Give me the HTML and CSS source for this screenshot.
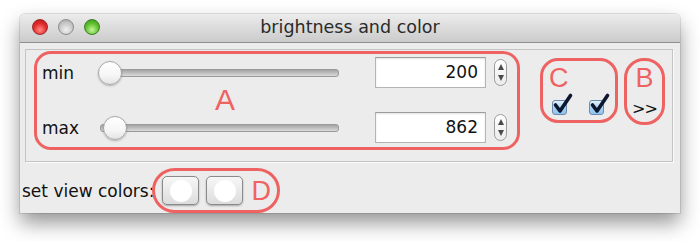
FILE: index.html
```html
<!DOCTYPE html>
<html lang="en">
<head>
    <meta charset="UTF-8">
    <title>brightness and color</title>
    <link rel="stylesheet" href="styles.css">
</head>
<body>
    <div class="window">
        <div class="titlebar">
            <div class="lights">
                <span class="light red"></span>
                <span class="light gray"></span>
                <span class="light green"></span>
            </div>
            <div class="title">brightness and color</div>
        </div>

        <div class="content">
            <div class="panel">
                <div class="mark mark-a">
                    <div class="row">
                        <span class="label">min</span>
                        <div class="slider"><span class="thumb"></span></div>
                        <div class="field">200</div>
                        <div class="spinner"><span class="up"></span><span class="down"></span></div>
                    </div>
                    <div class="tag tag-a">A</div>
                    <div class="row">
                        <span class="label">max</span>
                        <div class="slider"><span class="thumb thumb-max"></span></div>
                        <div class="field">862</div>
                        <div class="spinner"><span class="up"></span><span class="down"></span></div>
                    </div>
                </div>

                <div class="mark mark-c">
                    <div class="tag tag-c">C</div>
                    <div class="checks">
                        <span class="check">
                            <svg width="22" height="24" viewBox="0 0 22 24"><path d="M3.5 13 L8 19 L18.5 3.5" fill="none" stroke="#0b1830" stroke-width="3.6" stroke-linecap="round" stroke-linejoin="round"/></svg>
                        </span>
                        <span class="check">
                            <svg width="22" height="24" viewBox="0 0 22 24"><path d="M3.5 13 L8 19 L18.5 3.5" fill="none" stroke="#0b1830" stroke-width="3.6" stroke-linecap="round" stroke-linejoin="round"/></svg>
                        </span>
                    </div>
                </div>

                <div class="mark mark-b">
                    <div class="tag tag-b">B</div>
                    <div class="more">&gt;&gt;</div>
                </div>
            </div>

            <div class="bottom">
                <span class="label">set view colors:</span>
                <div class="mark mark-d">
                    <button class="swatch"><span class="dot"></span></button>
                    <button class="swatch"><span class="dot"></span></button>
                    <span class="tag tag-d">D</span>
                </div>
            </div>
        </div>
    </div>
</body>
</html>
```

FILE: styles.css
```css
body {
    margin: 0;
    padding-bottom: 29px;
    background-color: #ffffff;
    font-family: "DejaVu Sans", sans-serif;
    color: #111111;
}
.window {
    margin: 14px 0 0 20px;
    width: 660px;
    height: 199px;
    background-color: #ececec;
    border-radius: 5px 5px 0 0;
    box-shadow: 0 10px 20px rgba(0, 0, 0, 0.42), 0 0 0 1px rgba(0, 0, 0, 0.1);
}
.titlebar {
    height: 28px;
    border-bottom: 1px solid #8e8e8e;
    border-radius: 5px 5px 0 0;
    background: linear-gradient(#ececec, #cbcbcb);
    display: flex;
    align-items: center;
    position: relative;
}
.lights {
    display: flex;
    gap: 10px;
    padding-left: 12px;
    margin-top: -2px;
}
.light {
    width: 16px;
    height: 16px;
    border-radius: 50%;
    box-sizing: border-box;
}
.red {
    background: radial-gradient(circle at 50% 70%, #ff8a80 0%, #e0282a 55%, #b0161a 100%);
    border: 1px solid #9d2a2a;
}
.gray {
    background: radial-gradient(circle at 50% 70%, #f0f0f0 0%, #c8c8c8 55%, #a0a0a0 100%);
    border: 1px solid #8c8c8c;
}
.green {
    background: radial-gradient(circle at 50% 70%, #c4f59a 0%, #5cbf2a 55%, #3a8e1a 100%);
    border: 1px solid #3f7f25;
}
.title {
    position: absolute;
    left: 0;
    right: 0;
    top: 3px;
    text-align: center;
    font-size: 17.5px;
    color: #2a2a2a;
    pointer-events: none;
}
.content {
    padding: 6px 0 0 5px;
}
.panel {
    width: 646px;
    height: 111px;
    border: 1px solid #c4c4c4;
    box-shadow: 1px 1px 0 #fafafa;
    display: flex;
    align-items: flex-start;
}
.mark {
    border: 3px solid #ef6262;
    box-sizing: border-box;
}
.tag {
    font-family: "Liberation Sans", sans-serif;
    color: #ef6262;
}
.mark-a {
    width: 486px;
    height: 99px;
    margin: 1px 0 0 8px;
    border-radius: 17px;
    padding: 3px 0 0 5px;
}
.row {
    display: flex;
    align-items: center;
    height: 31px;
}
.label {
    font-size: 17px;
}
.row .label {
    width: 56px;
}
.slider {
    width: 241px;
    height: 24px;
    display: flex;
    align-items: center;
    position: relative;
}
.slider::before {
    content: "";
    flex: 1;
    height: 6px;
    margin-left: 2px;
    border-radius: 3px;
    border: 1px solid #9a9a9a;
    background: linear-gradient(#a4a4a4, #dadada);
}
.thumb {
    position: absolute;
    left: 0;
    top: 0;
    width: 24px;
    height: 24px;
    box-sizing: border-box;
    border-radius: 50%;
    border: 1px solid #a8a8a8;
    background: linear-gradient(#ffffff, #f6f6f6 60%, #e4e4e4);
    box-shadow: 0 1px 2px rgba(0, 0, 0, 0.25);
}
.thumb-max {
    left: 5px;
}
.field {
    margin-left: 36px;
    width: 111px;
    height: 31px;
    box-sizing: border-box;
    border: 1px solid #b4b4b4;
    border-top-color: #9c9c9c;
    background-color: #ffffff;
    box-shadow: inset 0 1px 2px rgba(0, 0, 0, 0.12);
    font-size: 17px;
    line-height: 29px;
    text-align: right;
    padding-right: 7px;
}
.spinner {
    margin-left: 8px;
    width: 13px;
    height: 27px;
    box-sizing: border-box;
    border: 1px solid #9c9c9c;
    border-radius: 7px;
    background: linear-gradient(#ffffff, #ececec);
    display: flex;
    flex-direction: column;
    align-items: center;
    justify-content: center;
    gap: 5px;
}
.up, .down {
    width: 0;
    height: 0;
    border-left: 3.5px solid transparent;
    border-right: 3.5px solid transparent;
}
.up {
    border-bottom: 6px solid #4a4a4a;
}
.down {
    border-top: 6px solid #4a4a4a;
}
.tag-a {
    height: 24px;
    line-height: 24px;
    font-size: 30px;
    padding-left: 173px;
}
.mark-c {
    width: 78px;
    height: 65px;
    margin: 8px 0 0 20px;
    border-radius: 18px;
    padding: 2px 0 0 6px;
}
.tag-c {
    font-size: 27px;
    line-height: 30px;
}
.checks {
    display: flex;
    gap: 22px;
    margin-top: 7px;
    padding-left: 3px;
}
.check {
    width: 15px;
    height: 15px;
    box-sizing: border-box;
    border: 1px solid #6c8bad;
    border-radius: 3px;
    background: linear-gradient(#e4f1fc, #a8d0f2 55%, #8ec2ee);
    position: relative;
}
.check svg {
    position: absolute;
    left: -1px;
    top: -9px;
}
.mark-b {
    width: 41px;
    height: 67px;
    margin: 8px 0 0 6px;
    border-radius: 20px;
    display: flex;
    flex-direction: column;
    align-items: center;
    padding-top: 2px;
}
.tag-b {
    font-size: 27px;
    line-height: 30px;
}
.more {
    font-size: 16px;
    letter-spacing: -1px;
    margin-top: 6px;
    color: #111111;
}
.bottom {
    display: flex;
    align-items: center;
    margin: 6px 0 0 -3px;
}
.mark-d {
    width: 128px;
    height: 45px;
    margin-left: -2px;
    border-radius: 23px;
    display: flex;
    align-items: center;
    padding-left: 7px;
    gap: 7px;
}
.swatch {
    width: 37px;
    height: 29px;
    padding: 0;
    border: 1px solid #8a8a8a;
    border-radius: 5px;
    background: linear-gradient(#f7f7f7, #dcdcdc);
    box-shadow: 0 1px 2px rgba(0, 0, 0, 0.3);
    display: flex;
    align-items: center;
    justify-content: center;
}
.dot {
    width: 22px;
    height: 22px;
    border-radius: 50%;
    background-color: #ffffff;
}
.tag-d {
    font-size: 27px;
    line-height: 30px;
    margin-left: 1px;
}
```
